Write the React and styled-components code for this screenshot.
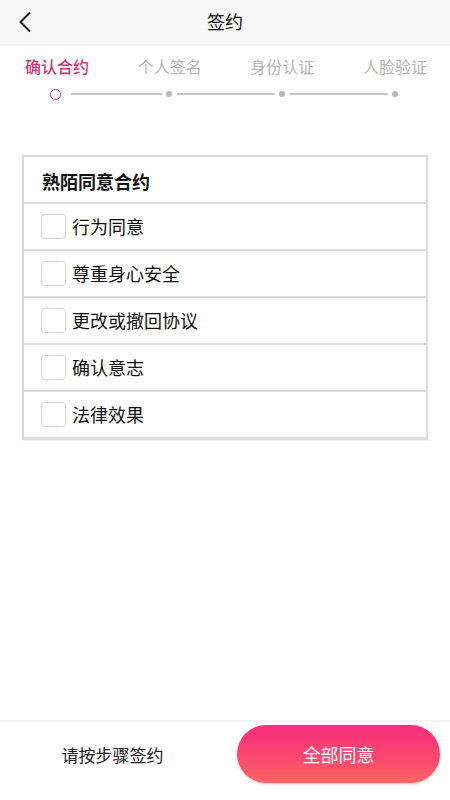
import React, { useState } from 'react';
import styled, { createGlobalStyle } from 'styled-components';

const GlobalStyle = createGlobalStyle`
  html, body {
    margin: 0;
    padding: 0;
    background: #fff;
  }
  body {
    font-family: "Noto Sans CJK SC", "Noto Sans", sans-serif;
  }
`;

const steps = ['确认合约', '个人签名', '身份认证', '人脸验证'];
const items = ['行为同意', '尊重身心安全', '更改或撤回协议', '确认意志', '法律效果'];

export default function App() {
  const [checked, setChecked] = useState([]);

  function toggle(i) {
    setChecked(c => (c.includes(i) ? c.filter(x => x !== i) : [...c, i]));
  }

  return (
    <Page>
      <GlobalStyle />
      <Header>
        <Back>
          <svg width="14" height="22" viewBox="0 0 14 22">
            <path d="M12 1.5 L2.5 11 L12 20.5" fill="none" stroke="#222" strokeWidth="2" />
          </svg>
        </Back>
        <Title>签约</Title>
      </Header>

      <Steps>
        {steps.map((s, i) => (
          <StepLabel key={s} active={i === 0}>{s}</StepLabel>
        ))}
      </Steps>
      <Progress>
        <Ring />
        <Line width={91} />
        <Dot />
        <Line width={98} />
        <Dot />
        <Line width={98} />
        <Dot />
      </Progress>

      <Table>
        <TableHead>熟陌同意合约</TableHead>
        {items.map((t, i) => (
          <Row key={t} onClick={() => toggle(i)}>
            <Box checked={checked.includes(i)} />
            <RowText>{t}</RowText>
          </Row>
        ))}
      </Table>

      <Spacer />

      <Footer>
        <Hint>请按步骤签约</Hint>
        <AgreeButton onClick={() => setChecked(items.map((_, i) => i))}>全部同意</AgreeButton>
      </Footer>
    </Page>
  );
}

const Page = styled.div`
  width: 450px;
  height: 800px;
  display: flex;
  flex-direction: column;
  background: #fff;
`;

const Header = styled.div`
  position: relative;
  height: 46px;
  box-sizing: border-box;
  padding-bottom: 4px;
  background: #f6f6f6;
  display: flex;
  align-items: center;
  justify-content: center;
`;

const Back = styled.div`
  position: absolute;
  left: 18px;
  top: 11px;
  width: 14px;
  height: 22px;
`;

const Title = styled.div`
  font-size: 18px;
  color: #111;
  line-height: 1;
`;

const Steps = styled.div`
  display: flex;
  justify-content: space-between;
  padding: 0 23px 0 25px;
  margin-top: 10px;
  height: 20px;
  align-items: center;
`;

const StepLabel = styled.div`
  font-size: 16px;
  font-weight: ${p => (p.active ? 500 : 400)};
  color: ${p => (p.active ? '#c63b7c' : '#b4b4b4')};
  line-height: 1;
`;

const Progress = styled.div`
  display: flex;
  align-items: center;
  margin-top: 12px;
  padding-left: 50px;
  height: 12px;
`;

const Ring = styled.div`
  width: 9px;
  height: 9px;
  border: 1.5px solid #c63b7c;
  border-radius: 50%;
  margin-right: 10px;
`;

const Line = styled.div`
  width: ${p => p.width}px;
  height: 1.5px;
  background: #c8c8c8;
`;

const Dot = styled.div`
  width: 6px;
  height: 6px;
  border-radius: 50%;
  background: #b8b8b8;
  margin: 0 5px 0 4px;
`;

const Table = styled.div`
  margin: 55px 22px 0 22px;
  border: 2px solid #dcdcdc;
  border-bottom-width: 3px;
  box-shadow: 0 1px 1px rgba(0, 0, 0, 0.06);
`;

const TableHead = styled.div`
  height: 47px;
  display: flex;
  align-items: center;
  padding: 2px 0 0 18px;
  box-sizing: border-box;
  font-size: 18px;
  font-weight: 700;
  color: #111;
  border-bottom: 2px solid #dcdcdc;
`;

const Row = styled.div`
  height: 45px;
  box-sizing: border-box;
  padding: 0 0 1px 17px;
  display: flex;
  align-items: center;
  cursor: pointer;
  & + & {
    border-top: 2px solid #dcdcdc;
    height: 47px;
  }
`;

const Box = styled.div`
  width: 25px;
  height: 25px;
  box-sizing: border-box;
  border: 1px solid #d6d6d6;
  border-radius: 4px;
  background: ${p => (p.checked ? '#f7307a' : '#fff')};
  margin-right: 6px;
`;

const RowText = styled.div`
  font-size: 18px;
  color: #111;
  line-height: 1;
`;

const Spacer = styled.div`
  flex: 1;
`;

const Footer = styled.div`
  height: 80px;
  border-top: 2px solid #f3f3f3;
  display: flex;
  align-items: center;
  justify-content: space-between;
  padding: 0 10px 14px 0;
  box-sizing: border-box;
`;

const Hint = styled.div`
  width: 225px;
  text-align: center;
  font-size: 17px;
  color: #222;
`;

const AgreeButton = styled.button`
  width: 203px;
  height: 58px;
  border: none;
  border-radius: 29px;
  background: linear-gradient(180deg, #f72d7d 0%, #fa4a6c 60%, #fb6464 100%);
  box-shadow: 0 1px 3px rgba(240, 60, 100, 0.35);
  color: #fff;
  font-size: 18px;
  font-family: "Noto Sans CJK SC", "Noto Sans", sans-serif;
  cursor: pointer;
`;
